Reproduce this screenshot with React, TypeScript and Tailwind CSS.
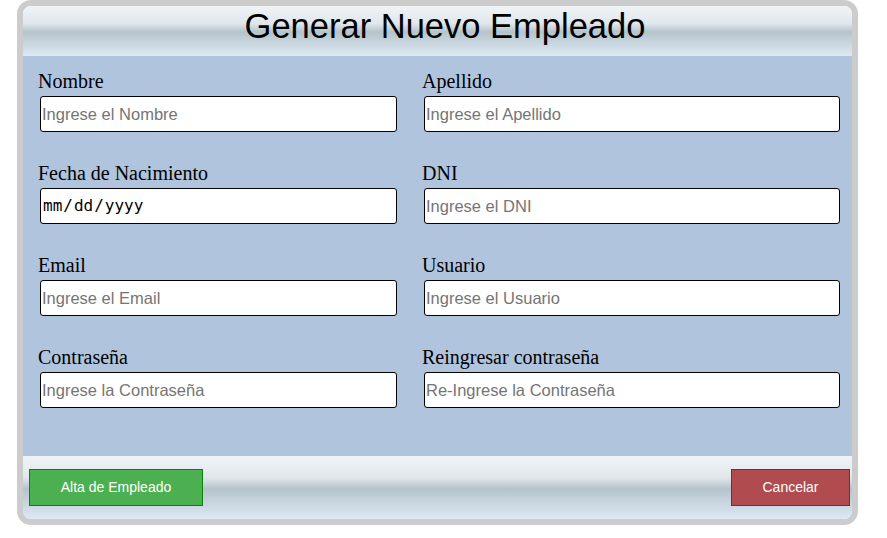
import React from "react";

const sans = "font-['Liberation_Sans',Arial,sans-serif]";

function Field({
  label,
  placeholder,
  wide,
  type = "text",
}: {
  label: string;
  placeholder?: string;
  wide?: boolean;
  type?: string;
}) {
  const w = wide ? "w-[416px]" : "w-[357px]";
  return (
    <div className="flex flex-col">
      <label className="font-['Liberation_Serif','Times_New_Roman',serif] text-[20px] leading-[22px] text-black">
        {label}
      </label>
      {type === "date" ? (
        <input
          type="date"
          className={`${w} ml-[2px] mt-[4px] h-[36px] rounded-[3px] border border-black bg-white px-[1px] font-['DejaVu_Sans_Mono',monospace] text-[16px] text-black outline-none [&::-webkit-calendar-picker-indicator]:hidden`}
        />
      ) : (
        <input
          type={type}
          placeholder={placeholder}
          className={`${w} ml-[2px] mt-[4px] h-[36px] rounded-[3px] border border-black bg-white px-[1px] ${sans} text-[16.5px] text-black outline-none placeholder:text-[#757575]`}
        />
      )}
    </div>
  );
}

export default function App() {
  return (
    <div className="min-h-[538px] w-full bg-white">
      <div className="ml-[17px] w-[841px] overflow-hidden rounded-[14px] border-[6px] border-[#cccccc]">
        <div
          className={`flex h-[50px] items-start justify-center bg-[linear-gradient(to_bottom,#f0f4f7_0%,#e0e7ec_35%,#b5c3cb_52%,#c6d4dd_72%,#dde9f3_100%)] pl-[15px] pt-[1px] ${sans} text-[34.5px] leading-[39px] text-black`}
        >
          Generar Nuevo Empleado
        </div>
        <div className="h-[400px] bg-[#b0c4de] px-[15px] pt-[14px]">
          <div className="grid grid-cols-[384px_1fr] gap-y-[30px]">
            <Field label="Nombre" placeholder="Ingrese el Nombre" />
            <Field label="Apellido" placeholder="Ingrese el Apellido" wide />
            <Field label="Fecha de Nacimiento" type="date" />
            <Field label="DNI" placeholder="Ingrese el DNI" wide />
            <Field label="Email" placeholder="Ingrese el Email" type="email" />
            <Field label="Usuario" placeholder="Ingrese el Usuario" wide />
            <Field label="Contraseña" placeholder="Ingrese la Contraseña" type="password" />
            <Field label="Reingresar contraseña" placeholder="Re-Ingrese la Contraseña" wide type="password" />
          </div>
        </div>
        <div className="flex h-[63px] items-center justify-between bg-[linear-gradient(to_bottom,#f0f4f7_0%,#e0e7ec_35%,#b5c3cb_52%,#c6d4dd_72%,#dde9f3_100%)] pl-[6px] pr-[2px]">
          <button
            className={`h-[37px] w-[174px] border border-[#0a830a] bg-[#4caf50] ${sans} text-[14px] text-white`}
          >
            Alta de Empleado
          </button>
          <button
            className={`h-[37px] w-[119px] border border-[#e00000] bg-[#b04b4f] ${sans} text-[14px] text-white`}
          >
            Cancelar
          </button>
        </div>
      </div>
    </div>
  );
}
